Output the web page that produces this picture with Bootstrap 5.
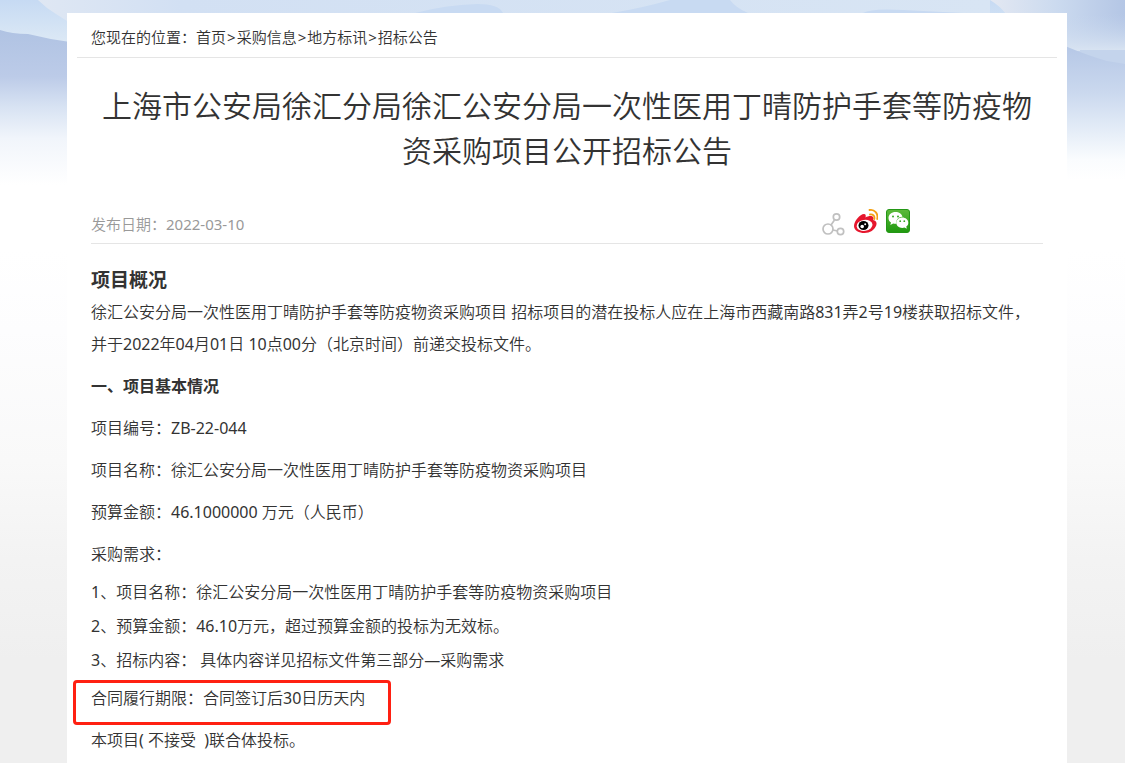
<!DOCTYPE html>
<html lang="zh-CN">
<head>
<meta charset="utf-8">
<meta name="viewport" content="width=device-width, initial-scale=1">
<title>招标公告</title>
<link href="https://cdn.jsdelivr.net/npm/bootstrap@5.3.0/dist/css/bootstrap.min.css" rel="stylesheet">
<style>
  body {
    font-family: "Noto Sans", "Noto Sans CJK SC DemiLight", "Noto Sans CJK SC", sans-serif;
    font-size: 16px;
    font-weight: 400;
    line-height: 32px;
    color: #333;
    background: linear-gradient(#fff 0, #fff 250px, #fdfdfe 330px, #f9f9f9 460px, #f3f3f3 560px, #efefef 660px, #efefef 100%);
  }
  .scenery { height: 190px; z-index: -1; }
  .page-wrap { padding: 13px 58px 0 67px; }
  .sheet { min-height: calc(100vh - 13px); padding: 0 10px; }
  .crumbs { font-size: 15px; line-height: 24px; padding: 12px 14px 8px; border-bottom: 1px solid #e5e5e5; }
  .crumbs a { color: inherit; text-decoration: none; }
  .crumbs span { padding: 0 1px; }
  .notice { padding: 0 14px; }
  .headline { font-size: 30px; font-weight: 400; line-height: 45px; margin: 25px 0 35px; }
  .meta { height: 36px; font-size: 15px; line-height: 32px; color: #999; border-bottom: 1px solid #e5e5e5; }
  .share { gap: 8px; margin-right: 133px; }
  .share a { display: block; line-height: 0; }
  .overview, .section-title { font-family: "Noto Sans", "Noto Sans CJK SC", sans-serif; font-weight: 700; line-height: 32px; }
  .overview { font-size: 19px; margin: 20px 0 0; }
  .section-title { font-size: 16px; }
  .section-title, .notice p { margin: 0 0 10px; }
  .needs { line-height: 34px; margin: -5px 0 5px; }
  .marked::before {
    content: ""; position: absolute; left: -18px; top: -2px;
    width: 318px; height: 45px; border: 3px solid #ff2012; border-radius: 4px;
  }
</style>
</head>
<body>
<svg class="scenery position-absolute top-0 start-0 w-100" viewBox="0 0 1125 190" preserveAspectRatio="none" aria-hidden="true">
  <defs>
    <linearGradient id="sky" gradientUnits="userSpaceOnUse" x1="0" y1="0" x2="0" y2="40"><stop offset="0" stop-color="#c6daf3"/><stop offset="1" stop-color="#dbe8f5"/></linearGradient>
    <linearGradient id="hillL" gradientUnits="userSpaceOnUse" x1="0" y1="30" x2="0" y2="185"><stop offset="0" stop-color="#b0c3e3"/><stop offset=".3" stop-color="#bccbe8"/><stop offset=".5" stop-color="#d8e3f3"/><stop offset=".7" stop-color="#f1f5fb"/><stop offset="1" stop-color="#fff"/></linearGradient>
    <linearGradient id="hillR" gradientUnits="userSpaceOnUse" x1="0" y1="45" x2="0" y2="180"><stop offset="0" stop-color="#b5c7e6"/><stop offset=".35" stop-color="#cad8ee"/><stop offset=".65" stop-color="#e6eef8"/><stop offset=".85" stop-color="#fafcfe"/><stop offset="1" stop-color="#fff"/></linearGradient>
    <linearGradient id="topBand" x1="0" y1="0" x2="1" y2="0"><stop offset="0" stop-color="#dfe7f3"/><stop offset=".15" stop-color="#d2e0f3"/><stop offset="1" stop-color="#d8e5f4"/></linearGradient>
    <linearGradient id="skyR" x1="0" y1="0" x2="1" y2="0"><stop offset="0" stop-color="#e3e8f2"/><stop offset=".5" stop-color="#cbdaef"/><stop offset="1" stop-color="#b4c6e5"/></linearGradient>
    <linearGradient id="mistR" x1="0" y1="0" x2="0" y2="1"><stop offset="0" stop-color="#c5d5ed" stop-opacity="0"/><stop offset="1" stop-color="#d9e4f2"/></linearGradient>
  </defs>
  <path fill="url(#sky)" d="M0 0h1125v190H0z"/>
  <path fill="url(#topBand)" d="M38 0h952v13H67v8l-11-7Q46 8 38 0z"/>
  <path fill="#c8daf2" d="M415 13q30-8 62-9 22 0 26 9zM612 13q30-5 58-13h60q6 8 18 13zM863 13q8-5 40-3l60 3z"/>
  <path fill="url(#skyR)" d="M990 0h135v60h-58V14h-61q-6-8-16-14z"/>
  <path fill="url(#mistR)" d="M1067 14h58v37h-58z"/>
  <path fill="url(#hillL)" d="M0 30q12 4 28 4 20 5 42 8v148H0z"/>
  <path fill="#c4d4ec" d="M1080 50h45v20h-45z"/>
  <path fill="url(#hillR)" d="M1065 46q24 10 42 15l18 3v126h-60z"/>
</svg>
<main class="page-wrap">
  <div class="sheet bg-white">
    <nav class="crumbs" aria-label="您现在的位置">您现在的位置：<a href="#">首页</a><span>&gt;</span><a href="#">采购信息</a><span>&gt;</span><a href="#">地方标讯</a><span>&gt;</span><a href="#">招标公告</a></nav>
    <article class="notice">
      <h1 class="headline text-center">上海市公安局徐汇分局徐汇公安分局一次性医用丁晴防护手套等防疫物资采购项目公开招标公告</h1>
      <div class="meta d-flex justify-content-between align-items-start">
        <span>发布日期：2022-03-10</span>
        <div class="share d-flex">
          <a href="#" aria-label="分享"><svg width="24" height="30" viewBox="0 0 24 30" fill="none" stroke="#c0c0c0" stroke-width="1.7"><circle cx="6" cy="21" r="5"/><circle cx="14.500" cy="9" r="3.200"/><circle cx="18.500" cy="23.500" r="3.200"/><path d="M9 17l3.500-5M11 22l4.500 1"/></svg></a>
          <a href="#" aria-label="微博"><svg width="24" height="26" viewBox="0 0 24 26"><path fill="#e6162d" d="M10 6c2 0 2 2 1.500 3.500C14 8 18 7.500 19 9c1 1 .5 2 .2 3 3 .8 4 3 3 5.500C20.500 22 16 25 10.500 25 5 25 0 22.500 0 18 0 13 6 6 10 6z"/><ellipse cx="10.500" cy="17.500" rx="8" ry="5.500" fill="#fff" transform="rotate(-8 10 17)"/><ellipse cx="9.500" cy="17.500" rx="5" ry="4.600"/><circle cx="8.200" cy="18.500" r="1.800" fill="#fff"/><circle cx="11.200" cy="16.300" r="1" fill="#fff"/><path fill="none" stroke="#f4a012" stroke-width="1.800" stroke-linecap="round" d="M16 6.500c3-.5 5 1.500 4.300 4.500M15.500 2c5-1 9 3.500 7.700 9"/></svg></a>
          <a href="#" aria-label="微信"><svg width="24" height="26" viewBox="0 0 24 26"><defs><linearGradient id="wx" x1="0" y1="0" x2="0" y2="1"><stop offset="0" stop-color="#5cba3c"/><stop offset="1" stop-color="#1f990f"/></linearGradient></defs><rect x=".5" y="1.500" width="23" height="23" rx="2.500" fill="url(#wx)" stroke="#249716"/><path fill="#fff" d="M9.500 4C5.500 4 2.500 6.600 2.500 10c0 2 1 3.500 2.500 4.500L4.300 17l2.900-1.500c1 .3 2 .4 3.300.3C9.500 11.500 13 8.500 16.500 8.700 15.800 6 13 4 9.500 4z"/><path fill="#fff" d="M16.300 9.600c-3.300 0-6 2.200-6 5.100s2.700 5.200 6 5.200c.8 0 1.500-.1 2.200-.4l2.300 1.300-.5-2.200c1.300-1 2-2.300 2-3.900 0-2.900-2.700-5.100-6-5.100z"/><g fill="#36a824"><circle cx="7" cy="8.500" r="1"/><circle cx="12" cy="8.500" r="1"/><circle cx="14.200" cy="13.200" r=".9"/><circle cx="18.300" cy="13.200" r=".9"/></g></svg></a>
        </div>
      </div>
      <h2 class="overview">项目概况</h2>
      <p>徐汇公安分局一次性医用丁晴防护手套等防疫物资采购项目 招标项目的潜在投标人应在上海市西藏南路831弄2号19楼获取招标文件，并于2022年04月01日 10点00分（北京时间）前递交投标文件。</p>
      <h3 class="section-title">一、项目基本情况</h3>
      <p>项目编号：ZB-22-044</p>
      <p>项目名称：徐汇公安分局一次性医用丁晴防护手套等防疫物资采购项目</p>
      <p>预算金额：46.1000000 万元（人民币）</p>
      <p>采购需求：</p>
      <div class="needs">
        <div>1、项目名称：徐汇公安分局一次性医用丁晴防护手套等防疫物资采购项目</div>
        <div>2、预算金额：46.10万元，超过预算金额的投标为无效标。</div>
        <div>3、招标内容： 具体内容详见招标文件第三部分—采购需求</div>
      </div>
      <p class="marked position-relative">合同履行期限：合同签订后30日历天内</p>
      <p class="mb-0">本项目( 不接受&nbsp; )联合体投标。</p>
    </article>
  </div>
</main>
<script src="https://cdn.jsdelivr.net/npm/bootstrap@5.3.0/dist/js/bootstrap.bundle.min.js"></script>
</body>
</html>
